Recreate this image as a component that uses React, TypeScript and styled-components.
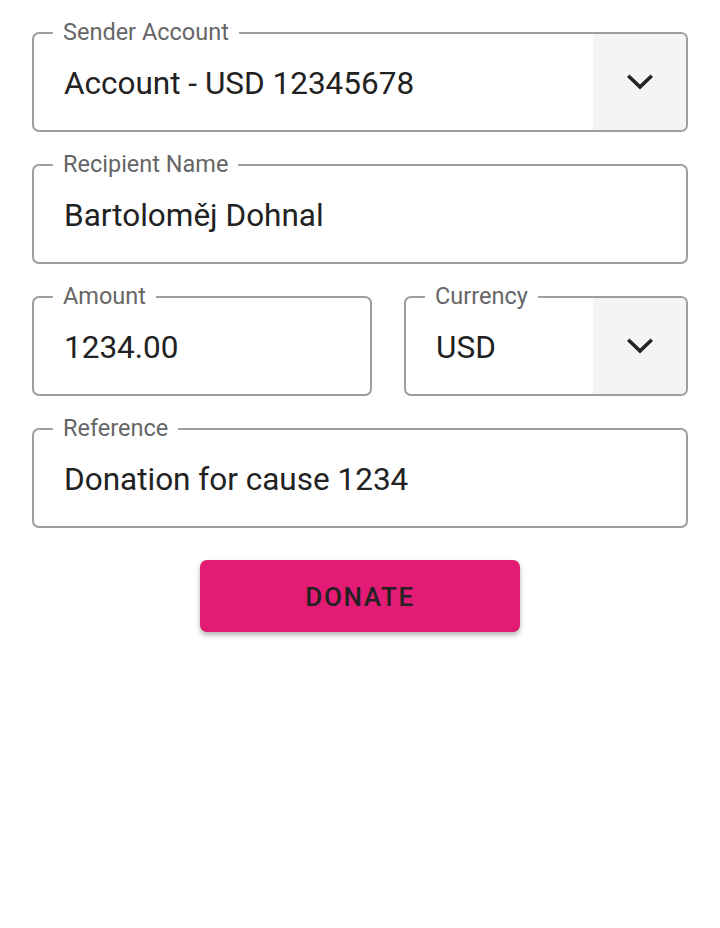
import React from "react";
import styled, { createGlobalStyle } from "styled-components";

const GlobalStyle = createGlobalStyle`
  html, body {
    margin: 0;
    padding: 0;
    background: #ffffff;
  }
  body {
    font-family: Roboto, "Noto Sans", "Liberation Sans", sans-serif;
    color: #222222;
  }
`;

const Form = styled.form`
  display: flex;
  flex-direction: column;
  gap: 32px;
  padding: 32px;
  width: 720px;
  box-sizing: border-box;
`;

const Row = styled.div`
  display: flex;
  gap: 32px;
`;

const Field = styled.div<{ $width?: number }>`
  position: relative;
  flex: ${(p) => (p.$width ? `0 0 ${p.$width}px` : `1 0 auto`)};
  min-width: 0;
  height: 100px;
  box-sizing: border-box;
  border: 2px solid #9e9e9e;
  border-radius: 7px;
  display: flex;
  align-items: stretch;
`;

const Label = styled.label`
  position: absolute;
  top: -16px;
  left: 19px;
  padding: 0 10px;
  background: #ffffff;
  font-size: 23.5px;
  line-height: 28px;
  color: #666666;
`;

const Value = styled.div`
  flex: 1;
  display: flex;
  align-items: center;
  padding-left: 30px;
  padding-top: 2px;
  font-size: 31.5px;
  color: #222222;
  white-space: nowrap;
`;

const DropButton = styled.div`
  flex: 0 0 93px;
  background: #f4f4f4;
  border-radius: 0 5px 5px 0;
  display: flex;
  align-items: center;
  justify-content: center;
`;

const Actions = styled.div`
  display: flex;
  justify-content: center;
`;

const Donate = styled.button`
  width: 320px;
  height: 72px;
  border: none;
  border-radius: 7px;
  background: #e31b74;
  color: #222222;
  font-family: Roboto, "Noto Sans", sans-serif;
  font-size: 26px;
  font-weight: 500;
  letter-spacing: 1.6px;
  padding-top: 2px;
  box-shadow: 0 3px 5px rgba(0, 0, 0, 0.3);
  cursor: pointer;
`;

const Chevron = () => (
  <svg width="26" height="16" viewBox="0 0 26 16" aria-hidden="true">
    <polyline
      points="2.5,3 13,13 23.5,3"
      fill="none"
      stroke="#222222"
      strokeWidth="3.6"
      strokeLinecap="square"
    />
  </svg>
);

type FieldProps = {
  label: string;
  value: string;
  select?: boolean;
  width?: number;
};

const TextField = ({ label, value, select, width }: FieldProps) => (
  <Field $width={width}>
    <Label>{label}</Label>
    <Value>{value}</Value>
    {select && (
      <DropButton>
        <Chevron />
      </DropButton>
    )}
  </Field>
);

export default function App() {
  return (
    <>
      <GlobalStyle />
      <Form onSubmit={(e) => e.preventDefault()}>
        <TextField label="Sender Account" value="Account - USD 12345678" select />
        <TextField label="Recipient Name" value="Bartoloměj Dohnal" />
        <Row>
          <TextField label="Amount" value="1234.00" width={340} />
          <TextField label="Currency" value="USD" select />
        </Row>
        <TextField label="Reference" value="Donation for cause 1234" />
        <Actions>
          <Donate type="submit">DONATE</Donate>
        </Actions>
      </Form>
    </>
  );
}
